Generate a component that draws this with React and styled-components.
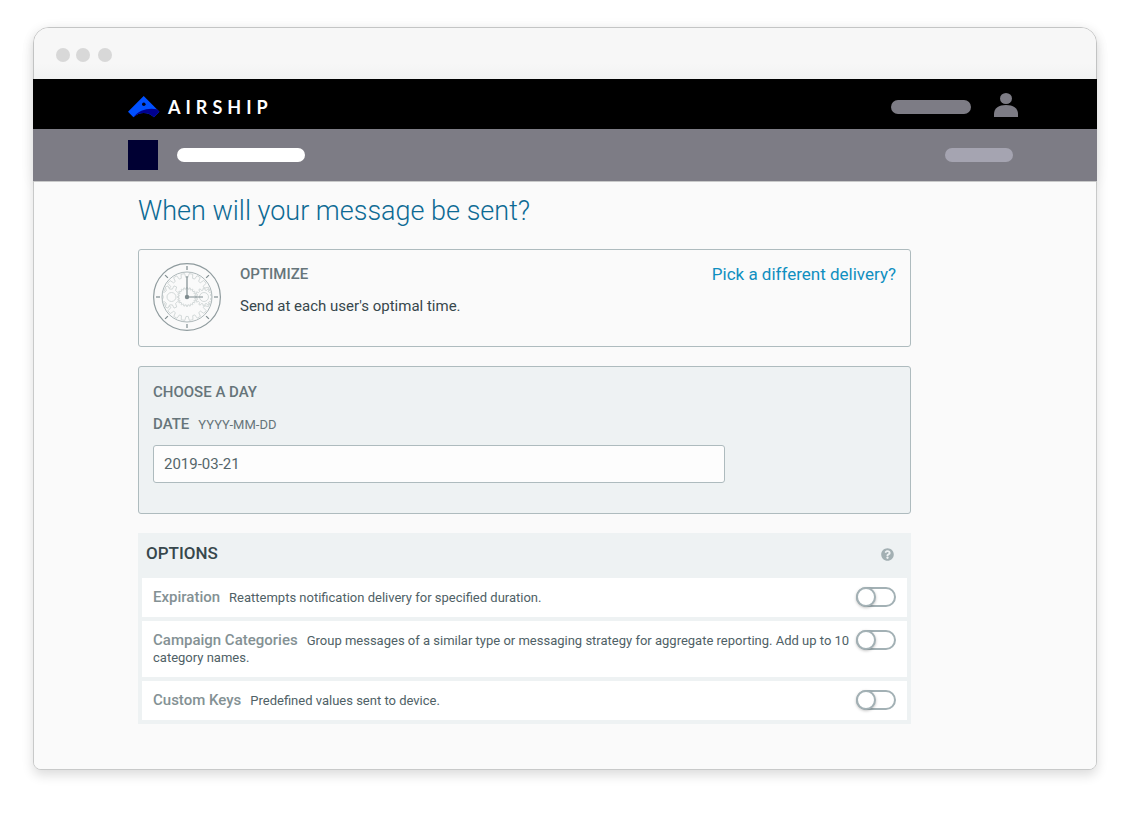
import { useState } from "react";
import styled, { createGlobalStyle } from "styled-components";
import { FaQuestionCircle } from "react-icons/fa";

const GlobalStyle = createGlobalStyle`
  *, *::before {
    box-sizing: border-box;
  }
  body {
    margin: 0;
    background: #fff;
    font-family: Roboto, "Liberation Sans", sans-serif;
    color: #37474c;
  }
`;

const Page = styled.div`
  padding: 27px 42px 46px 33px;
`;

const Window = styled.div`
  border: 1px solid #c8c9c9;
  border-radius: 16px 16px 8px 8px;
  background: #fafafa;
  box-shadow: 0 5px 12px rgba(0, 0, 0, 0.14);
`;

const Chrome = styled.div`
  border-radius: 15px 15px 0 0;
  box-shadow: 0 2px 16px rgba(0, 0, 0, 0.06);
`;

const TitleBar = styled.div`
  display: flex;
  align-items: center;
  height: 51px;
  padding: 3px 22px 0;
  border-radius: 15px 15px 0 0;
  background: linear-gradient(#f7f7f7 70%, #f1f2f2);
`;

const Dot = styled.span`
  width: 14px;
  height: 14px;
  margin-right: ${(props) => props.$gap || 0}px;
  border-radius: 50%;
  background: #d8d8d8;
`;

const NavBar = styled.header`
  display: flex;
  align-items: center;
  justify-content: space-between;
  height: 50px;
  margin: 0 -1px;
  padding: 5px 79px 0 95px;
  background: #000;
`;

const SubBar = styled(NavBar)`
  height: 52px;
  padding: 0 84px 1px 95px;
  background: #7d7c85;
`;

const Group = styled.div`
  display: flex;
  align-items: center;
  gap: ${(props) => props.$gap}px;
`;

const Wordmark = styled.span`
  font-family: Lato, sans-serif;
  font-size: 18px;
  font-weight: 700;
  line-height: 20px;
  letter-spacing: 5px;
  color: #fff;
`;

const Pill = styled.span`
  width: ${(props) => props.$width}px;
  height: 14px;
  border-radius: 7px;
  background: ${(props) => props.$color};
`;

const AppIcon = styled.span`
  width: 30px;
  height: 30px;
  background: #000033;
`;

const Content = styled.form`
  padding: 10px 104px 45px;
  border-top: 1px solid #c8c9c9;
  border-radius: 0 0 7px 7px;
  background: #fafafa;

  & > * {
    max-width: 773px;
  }
`;

const Title = styled.h1`
  margin: 0 0 19px;
  font-size: 27px;
  font-weight: 300;
  line-height: 38px;
  color: #0d6a94;
`;

const Card = styled.section`
  display: flex;
  gap: 17px;
  padding: 12px 14px 14px;
  border: 1px solid #aebbbe;
  border-radius: 3px;
  margin-bottom: 19px;
`;

const CardText = styled.div`
  flex: 1;
`;

const Heading = styled.h2`
  margin: 0;
  font-size: 15px;
  font-weight: 500;
  line-height: 24px;
  color: #66757a;
`;

const Description = styled.p`
  margin: 8px 0 0;
  font-size: 15px;
  line-height: 24px;
`;

const DeliveryLink = styled.a`
  font-size: 17px;
  line-height: 24px;
  color: #0f8fc0;
  text-decoration: none;
`;

const DayPanel = styled(Card)`
  flex-direction: column;
  gap: 8px;
  padding: 13px 14px 30px;
  background: #eef2f3;
`;

const DateLabel = styled.label`
  font-size: 15px;
  font-weight: 500;
  line-height: 24px;
  color: #66757a;
`;

const Hint = styled.span`
  margin-left: 9px;
  font-size: 13px;
  font-weight: 400;
`;

const DateInput = styled.input`
  width: 77%;
  height: 38px;
  padding: 0 10px;
  border: 1px solid #aebbbe;
  border-radius: 3px;
  background: #fdfdfd;
  font-family: inherit;
  font-size: 15px;
  color: #55666a;
`;

const Options = styled.section`
  display: flex;
  flex-direction: column;
  gap: 4px;
  padding: 0 4px 4px;
  background: #eef2f3;
`;

const OptionsHeader = styled.div`
  display: flex;
  align-items: center;
  justify-content: space-between;
  height: 41px;
  padding: 0 13px 2px 4px;
`;

const OptionsTitle = styled.h2`
  margin: 0;
  font-size: 17px;
  font-weight: 500;
  color: #37474c;
`;

const HelpButton = styled.button`
  display: flex;
  padding: 3px 0 0;
  border: none;
  background: none;
  color: #a3b0b3;
  cursor: pointer;
`;

const Row = styled.div`
  display: flex;
  align-items: flex-start;
  justify-content: space-between;
  gap: 4px;
  padding: 11px;
  background: #fff;
`;

const RowLabel = styled.label`
  font-size: 13px;
  line-height: 17px;
  color: #4f6166;
`;

const RowName = styled.span`
  margin-right: 9px;
  font-size: 15px;
  font-weight: 500;
  line-height: 15px;
  color: #849194;
`;

const Switch = styled.input`
  flex: none;
  appearance: none;
  width: 40px;
  height: 20px;
  margin: -2px 0;
  border: 2px solid #a3b1b5;
  border-radius: 10px;
  background: #fff;
  cursor: pointer;

  &::before {
    content: "";
    display: block;
    width: 20px;
    height: 20px;
    margin: -2px;
    border: 2px solid #a3b1b5;
    border-radius: 50%;
    background: #fff;
    box-shadow: 0 1px 3px rgba(0, 0, 0, 0.25);
  }
  &:checked {
    background: #0f8fc0;
  }
  &:checked::before {
    margin-left: 18px;
  }
`;

const options = [
  {
    id: "expiration",
    name: "Expiration",
    text: "Reattempts notification delivery for specified duration.",
  },
  {
    id: "categories",
    name: "Campaign Categories",
    text: "Group messages of a similar type or messaging strategy for aggregate reporting. Add up to 10 category names.",
  },
  {
    id: "keys",
    name: "Custom Keys",
    text: "Predefined values sent to device.",
  },
];

// closed outline of a gear, four points for every tooth
const gear = (cx, cy, inner, outer, teeth, turn = 0) => {
  const step = (Math.PI * 2) / teeth;
  const point = (r, a) =>
    `${(cx + r * Math.cos(a)).toFixed(2)} ${(cy + r * Math.sin(a)).toFixed(2)}`;
  const points = [];
  for (let i = 0; i < teeth; i++) {
    const a = i * step + turn;
    points.push(
      point(inner, a - step * 0.28),
      point(outer, a - step * 0.16),
      point(outer, a + step * 0.16),
      point(inner, a + step * 0.28)
    );
  }
  return `M${points.join("L")}Z`;
};

const Clock = () => (
  <svg width="70" height="70" viewBox="0 0 70 70" fill="none" aria-hidden="true">
    <defs>
      <clipPath id="face">
        <circle cx="34" cy="35" r="25" />
      </clipPath>
    </defs>
    <g stroke="#c9d0d1" strokeWidth="0.8" strokeLinejoin="round" clipPath="url(#face)">
      <path d={gear(34, 35, 23.5, 19.5, 18, 0.17)} />
      <path d={gear(18, 35, 8, 11.5, 8, 0.39)} fill="#fafafa" />
      <circle cx="18.5" cy="35" r="4.5" />
      <path d={gear(51, 35, 7, 9, 12)} fill="#fafafa" />
      <circle cx="51" cy="35" r="4.5" />
      <path d={gear(34, 35, 8, 9.5, 20)} fill="#fafafa" />
    </g>
    <circle cx="34" cy="35" r="25" stroke="#adb7b9" />
    <circle cx="34" cy="35" r="33.4" stroke="#8f9b9e" strokeWidth="1.2" />
    <g stroke="#7f8c8f" strokeWidth="1.2">
      {[0, 45, 90, 135, 180, 225, 270, 315].map((angle) => (
        <path key={angle} d="M34 4v4" transform={`rotate(${angle} 34 35)`} />
      ))}
      <path d="M34 35V14M34 35h16" />
    </g>
    <circle cx="34" cy="35" r="2.2" fill="#7f8c8f" />
  </svg>
);

const LogoMark = () => (
  <svg width="32" height="22" viewBox="0 0 32 22" aria-hidden="true">
    <path d="M15.7 0L31.4 15.7 26 21.3C20 15.6 11.5 15.6 5.4 21.3L0 15.8Z" fill="#0050ff" />
    <path d="M5.4 21.3C11 14 20 11.5 29 13.3L31.4 15.7 26 21.3C20 15.6 11.5 15.6 5.4 21.3Z" fill="#00008f" />
    <circle cx="15.8" cy="8.2" r="1.8" fill="#00001a" />
  </svg>
);

const UserIcon = () => (
  <svg width="24" height="28" viewBox="0 0 24 28" fill="#7d7c85" aria-hidden="true">
    <ellipse cx="12" cy="5.5" rx="6" ry="5.5" />
    <path d="M0 24V21C0 15 5 12 12 12s12 3 12 9v3z" />
  </svg>
);

const App = () => {
  const [date, setDate] = useState("2019-03-21");
  const [enabled, setEnabled] = useState({});

  const handleToggle = (event) => {
    setEnabled({ ...enabled, [event.target.id]: event.target.checked });
  };

  return (
    <Page>
      <GlobalStyle />
      <Window>
        <Chrome>
          <TitleBar>
            <Dot $gap={6} />
            <Dot $gap={8} />
            <Dot />
          </TitleBar>
          <NavBar>
            <Group $gap={8}>
              <LogoMark />
              <Wordmark>AIRSHIP</Wordmark>
            </Group>
            <Group $gap={23}>
              <Pill $width={80} $color="#7d7c85" />
              <UserIcon />
            </Group>
          </NavBar>
          <SubBar as="div">
            <Group $gap={19}>
              <AppIcon />
              <Pill $width={128} $color="#fff" />
            </Group>
            <Pill $width={68} $color="#a5a4b1" />
          </SubBar>
        </Chrome>
        <Content onSubmit={(event) => event.preventDefault()}>
          <Title>When will your message be sent?</Title>
          <Card>
            <Clock />
            <CardText>
              <Heading>OPTIMIZE</Heading>
              <Description>Send at each user's optimal time.</Description>
            </CardText>
            <DeliveryLink href="#delivery">Pick a different delivery?</DeliveryLink>
          </Card>
          <DayPanel>
            <Heading>CHOOSE A DAY</Heading>
            <DateLabel htmlFor="date">
              DATE
              <Hint>YYYY-MM-DD</Hint>
            </DateLabel>
            <DateInput
              id="date"
              type="text"
              value={date}
              onChange={(event) => setDate(event.target.value)}
            />
          </DayPanel>
          <Options>
            <OptionsHeader>
              <OptionsTitle>OPTIONS</OptionsTitle>
              <HelpButton type="button" aria-label="Help">
                <FaQuestionCircle size={13} />
              </HelpButton>
            </OptionsHeader>
            {options.map((option) => (
              <Row key={option.id}>
                <RowLabel htmlFor={option.id}>
                  <RowName>{option.name}</RowName>
                  {option.text}
                </RowLabel>
                <Switch
                  id={option.id}
                  type="checkbox"
                  checked={!!enabled[option.id]}
                  onChange={handleToggle}
                />
              </Row>
            ))}
          </Options>
        </Content>
      </Window>
    </Page>
  );
};

export default App;
